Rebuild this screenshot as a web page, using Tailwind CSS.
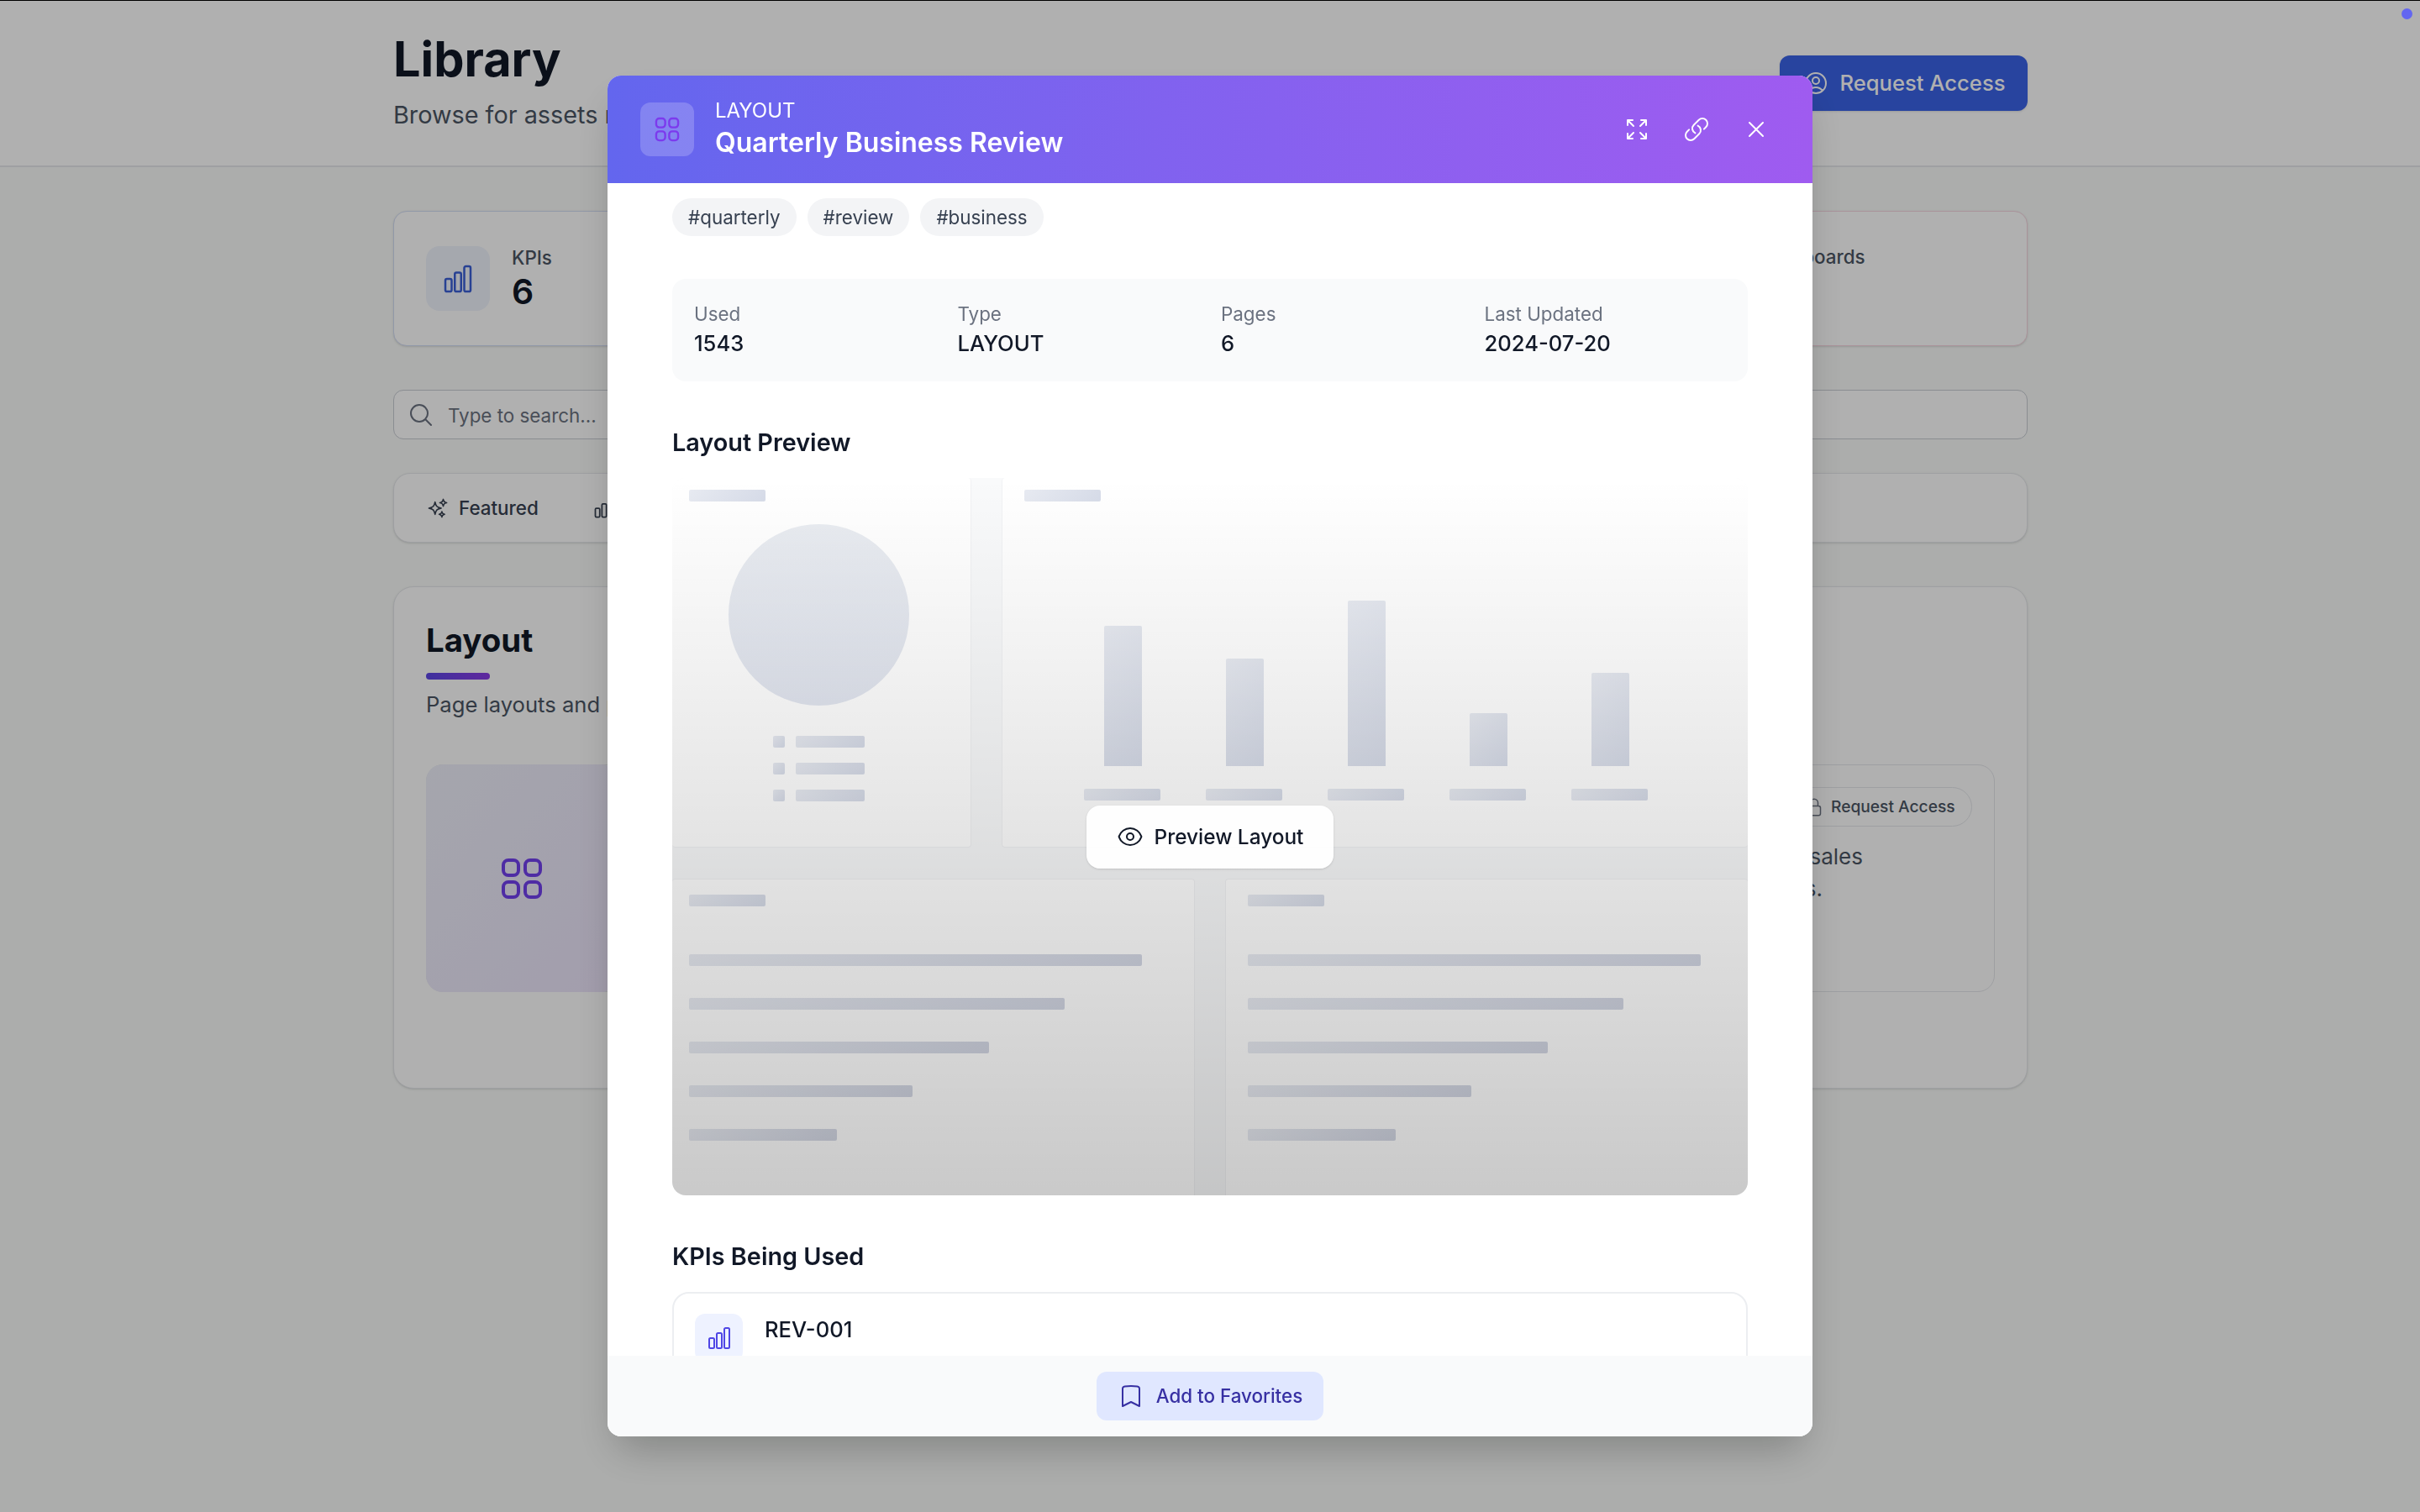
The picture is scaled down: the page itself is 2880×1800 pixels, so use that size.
<!DOCTYPE html>
<html lang="en">
<head>
  <meta charset="UTF-8" />
  <title>Library</title>
  <script src="https://cdn.jsdelivr.net/npm/@tailwindcss/browser@4"></script>
</head>
<body class="bg-[#f9fbf9] text-[#111827] font-[Inter,sans-serif] h-screen overflow-hidden">
  <!-- page behind the modal -->
  <header class="bg-white h-[199px] border-b-2 border-[#e5e7eb] pl-[468px] pr-[467px] flex justify-between">
    <div>
      <h1 class="text-[57.6px] leading-[72px] font-bold mt-[34px]">Library</h1>
      <p class="text-[28.8px] leading-[44px] text-[#4b5563] mt-[9px]">Browse for assets related to your business</p>
    </div>
    <button class="mt-[66px] w-[295px] h-[66px] rounded-[12px] bg-[#3a63e6] text-white text-[25.6px] font-medium flex items-center justify-center gap-[13px] shadow-sm">
      <svg class="w-[32px] h-[32px]" fill="none" viewBox="0 0 24 24" stroke="currentColor" stroke-width="1.5"><path stroke-linecap="round" stroke-linejoin="round" d="M17.982 18.725A7.488 7.488 0 0 0 12 15.75a7.488 7.488 0 0 0-5.982 2.975m11.963 0a9 9 0 1 0-11.963 0m11.963 0A8.966 8.966 0 0 1 12 21a8.966 8.966 0 0 1-5.982-2.275M15 9.75a3 3 0 1 1-6 0 3 3 0 0 1 6 0Z"/></svg>
      Request Access
    </button>
  </header>

  <main class="pl-[468px] pr-[467px] pt-[52px]">
    <div class="grid grid-cols-4 gap-8 h-[161px]">
      <div class="bg-white rounded-[16px] border border-[#d3dcf3] shadow-sm flex items-center gap-[26px] pl-[38px]">
        <div class="w-[76px] h-[77px] rounded-[16px] bg-[#eff3fd] flex items-center justify-center">
          <svg class="w-[40px] h-[40px] text-[#3a5fd6]" fill="none" viewBox="0 0 24 24" stroke="currentColor" stroke-width="1.5"><path d="M3 13.125C3 12.504 3.504 12 4.125 12h2.25c.621 0 1.125.504 1.125 1.125v6.75C7.5 20.496 6.996 21 6.375 21h-2.25A1.125 1.125 0 0 1 3 19.875v-6.75ZM9.75 8.625c0-.621.504-1.125 1.125-1.125h2.25c.621 0 1.125.504 1.125 1.125v11.25c0 .621-.504 1.125-1.125 1.125h-2.25a1.125 1.125 0 0 1-1.125-1.125V8.625ZM16.5 4.125c0-.621.504-1.125 1.125-1.125h2.25C20.496 3 21 3.504 21 4.125v15.75c0 .621-.504 1.125-1.125 1.125h-2.25a1.125 1.125 0 0 1-1.125-1.125V4.125Z"/></svg>
        </div>
        <div class="-mt-[2px]">
          <div class="text-[22.4px] leading-[32px] font-medium text-[#4b5563]">KPIs</div>
          <div class="text-[41px] leading-[48px] font-semibold">6</div>
        </div>
      </div>
      <div class="bg-white rounded-[16px] border border-[#e5e7eb]"></div>
      <div class="bg-white rounded-[16px] border border-[#e5e7eb]"></div>
      <div class="bg-white rounded-[16px] border border-[#f5d5e0] shadow-sm pl-[139px] pt-[38px]">
        <div class="text-[22.4px] leading-[32px] font-medium text-[#4b5563]">Dashboards</div>
      </div>
    </div>

    <div class="mt-[52px] h-[59px] bg-white rounded-[12px] border border-[#c8ccd3] flex items-center gap-[16px] pl-[16px]">
      <svg class="w-[32px] h-[32px] text-[#6b7280]" fill="none" viewBox="0 0 24 24" stroke="currentColor" stroke-width="1.5"><path stroke-linecap="round" stroke-linejoin="round" d="m21 21-5.197-5.197m0 0A7.5 7.5 0 1 0 5.196 5.196a7.5 7.5 0 0 0 10.607 10.607Z"/></svg>
      <span class="mt-[2px] text-[22.4px] text-[#6b7280]">Type to search...</span>
    </div>

    <div class="mt-[40px] h-[83px] bg-white rounded-[20px] border border-[#e5e7eb] shadow-sm flex items-center pl-[39px]">
      <svg class="w-[26px] h-[26px] text-[#374151]" fill="none" viewBox="0 0 24 24" stroke="currentColor" stroke-width="1.5"><path stroke-linecap="round" stroke-linejoin="round" d="M9.813 15.904 9 18.75l-.813-2.846a4.5 4.5 0 0 0-3.09-3.09L2.25 12l2.846-.813a4.5 4.5 0 0 0 3.09-3.09L9 5.25l.813 2.846a4.5 4.5 0 0 0 3.09 3.09L15.75 12l-2.846.813a4.5 4.5 0 0 0-3.09 3.09ZM18.259 8.715 18 9.75l-.259-1.035a3.375 3.375 0 0 0-2.455-2.456L14.25 6l1.036-.259a3.375 3.375 0 0 0 2.455-2.456L18 2.25l.259 1.035a3.375 3.375 0 0 0 2.456 2.456L21.75 6l-1.035.259a3.375 3.375 0 0 0-2.456 2.456ZM16.894 20.567 16.5 21.75l-.394-1.183a2.25 2.25 0 0 0-1.423-1.423L13.5 18.75l1.183-.394a2.25 2.25 0 0 0 1.423-1.423l.394-1.183.394 1.183a2.25 2.25 0 0 0 1.423 1.423l1.183.394-1.183.394a2.25 2.25 0 0 0-1.423 1.423Z"/></svg>
      <span class="ml-[12px] text-[22.4px] font-medium text-[#374151]">Featured</span>
      <svg class="ml-[64px] w-[28px] h-[28px] text-[#374151]" fill="none" viewBox="0 0 24 24" stroke="currentColor" stroke-width="1.5"><path d="M3 13.125C3 12.504 3.504 12 4.125 12h2.25c.621 0 1.125.504 1.125 1.125v6.75C7.5 20.496 6.996 21 6.375 21h-2.25A1.125 1.125 0 0 1 3 19.875v-6.75ZM9.75 8.625c0-.621.504-1.125 1.125-1.125h2.25c.621 0 1.125.504 1.125 1.125v11.25c0 .621-.504 1.125-1.125 1.125h-2.25a1.125 1.125 0 0 1-1.125-1.125V8.625ZM16.5 4.125c0-.621.504-1.125 1.125-1.125h2.25C20.496 3 21 3.504 21 4.125v15.75c0 .621-.504 1.125-1.125 1.125h-2.25a1.125 1.125 0 0 1-1.125-1.125V4.125Z"/></svg>
    </div>

    <section class="mt-[52px] h-[598px] bg-white rounded-[24px] border border-[#e5e7eb] shadow-sm px-[38px] pt-[36px]">
      <h2 class="text-[38.4px] leading-[54px] font-bold">Layout</h2>
      <div class="mt-[12px] w-[76px] h-[8px] rounded-full bg-linear-to-r from-[#5b46e5] to-[#8a3ae5]"></div>
      <p class="mt-[8px] text-[25.6px] leading-[44px] text-[#4b5563]">Page layouts and presentation templates</p>
      <div class="mt-[49px] h-[271px] rounded-[20px] border border-[#e5e7eb] flex">
        <div class="w-[228px] -m-px rounded-[20px] bg-linear-to-br from-[#eff1fb] to-[#ece4fb] flex items-center justify-center">
          <svg class="w-[64px] h-[64px] text-[#7240ee]" fill="none" viewBox="0 0 24 24" stroke="currentColor" stroke-width="1.5"><path d="M3.75 6A2.25 2.25 0 0 1 6 3.75h2.25A2.25 2.25 0 0 1 10.5 6v2.25a2.25 2.25 0 0 1-2.25 2.25H6a2.25 2.25 0 0 1-2.25-2.25V6ZM3.75 15.75A2.25 2.25 0 0 1 6 13.5h2.25a2.25 2.25 0 0 1 2.25 2.25V18a2.25 2.25 0 0 1-2.25 2.25H6A2.25 2.25 0 0 1 3.75 18v-2.25ZM13.5 6a2.25 2.25 0 0 1 2.25-2.25H18A2.25 2.25 0 0 1 20.25 6v2.25A2.25 2.25 0 0 1 18 10.5h-2.25a2.25 2.25 0 0 1-2.25-2.25V6ZM13.5 15.75a2.25 2.25 0 0 1 2.25-2.25H18a2.25 2.25 0 0 1 2.25 2.25V18A2.25 2.25 0 0 1 18 20.25h-2.25A2.25 2.25 0 0 1 13.5 18v-2.25Z"/></svg>
        </div>
        <div class="flex-1 pr-[156px] text-right text-[#4b5563]">
          <div class="flex justify-end -mr-[130px] mt-[26px]">
            <span class="h-[47px] w-[221px] rounded-full border border-[#e5e7eb] flex items-center gap-[8px] pl-[20px] text-[19.2px] font-medium">
              <svg class="w-[24px] h-[24px] text-[#6b7280]" fill="none" viewBox="0 0 24 24" stroke="currentColor" stroke-width="1.5"><path stroke-linecap="round" stroke-linejoin="round" d="M16.5 10.5V6.75a4.5 4.5 0 1 0-9 0v3.75m-.75 11.25h10.5a2.25 2.25 0 0 0 2.25-2.25v-6.75a2.25 2.25 0 0 0-2.25-2.25H6.75a2.25 2.25 0 0 0-2.25 2.25v6.75a2.25 2.25 0 0 0 2.25 2.25Z"/></svg>
              Request Access
            </span>
          </div>
          <p class="mt-[17px] text-[26px] leading-[38px]">Summary of quarterly sales</p>
          <p class="mr-[48px] text-[26px] leading-[38px]">and key metrics.</p>
        </div>
      </div>
    </section>
  </main>

  <!-- modal overlay -->
  <div class="fixed inset-0 bg-black/31 border-t border-black flex items-center justify-center">
    <div class="w-[1434px] h-[1620px] -mt-px bg-white rounded-[16px] shadow-2xl overflow-hidden flex flex-col">
      <div class="h-[128px] shrink-0 bg-linear-to-r from-[#6366ee] to-[#9f5bf0] flex items-center pl-[39px] pr-[51px] text-white">
        <div class="w-[64px] h-[64px] rounded-[12px] bg-white/20 flex items-center justify-center">
          <svg class="w-[38px] h-[38px] text-[#7c3aed]" fill="none" viewBox="0 0 24 24" stroke="currentColor" stroke-width="1.5"><path d="M3.75 6A2.25 2.25 0 0 1 6 3.75h2.25A2.25 2.25 0 0 1 10.5 6v2.25a2.25 2.25 0 0 1-2.25 2.25H6a2.25 2.25 0 0 1-2.25-2.25V6ZM3.75 15.75A2.25 2.25 0 0 1 6 13.5h2.25a2.25 2.25 0 0 1 2.25 2.25V18a2.25 2.25 0 0 1-2.25 2.25H6A2.25 2.25 0 0 1 3.75 18v-2.25ZM13.5 6a2.25 2.25 0 0 1 2.25-2.25H18A2.25 2.25 0 0 1 20.25 6v2.25A2.25 2.25 0 0 1 18 10.5h-2.25a2.25 2.25 0 0 1-2.25-2.25V6ZM13.5 15.75a2.25 2.25 0 0 1 2.25-2.25H18a2.25 2.25 0 0 1 2.25 2.25V18A2.25 2.25 0 0 1 18 20.25h-2.25A2.25 2.25 0 0 1 13.5 18v-2.25Z"/></svg>
        </div>
        <div class="ml-[25px] flex-1">
          <div class="text-[24px] leading-[32px]">LAYOUT</div>
          <div class="text-[32px] leading-[44px] font-semibold">Quarterly Business Review</div>
        </div>
        <div class="flex items-center gap-[39px]">
          <svg class="w-[32px] h-[32px]" fill="none" viewBox="0 0 24 24" stroke="currentColor" stroke-width="1.5"><path stroke-linecap="round" stroke-linejoin="round" d="M3.75 3.75v4.5m0-4.5h4.5m-4.5 0L9 9M3.75 20.25v-4.5m0 4.5h4.5m-4.5 0L9 15M20.25 3.75h-4.5m4.5 0v4.5m0-4.5L15 9m5.25 11.25h-4.5m4.5 0v-4.5m0 4.5L15 15"/></svg>
          <svg class="w-[32px] h-[32px]" fill="none" viewBox="0 0 24 24" stroke="currentColor" stroke-width="1.5"><path stroke-linecap="round" stroke-linejoin="round" d="M13.19 8.688a4.5 4.5 0 0 1 1.242 7.244l-4.5 4.5a4.5 4.5 0 0 1-6.364-6.364l1.757-1.757m13.35-.622 1.757-1.757a4.5 4.5 0 0 0-6.364-6.364l-4.5 4.5a4.5 4.5 0 0 0 1.242 7.244"/></svg>
          <svg class="w-[32px] h-[32px]" fill="none" viewBox="0 0 24 24" stroke="currentColor" stroke-width="1.5"><path stroke-linecap="round" stroke-linejoin="round" d="M6 18 18 6M6 6l12 12"/></svg>
        </div>
      </div>

      <div class="flex-1 overflow-hidden px-[77px] pt-[18px]">
        <div class="flex gap-[13px]">
          <span class="h-[45px] px-[19px] rounded-full bg-[#f3f4f6] text-[#374151] text-[22.4px] flex items-center">#quarterly</span>
          <span class="h-[45px] px-[19px] rounded-full bg-[#f3f4f6] text-[#374151] text-[22.4px] flex items-center">#review</span>
          <span class="h-[45px] px-[19px] rounded-full bg-[#f3f4f6] text-[#374151] text-[22.4px] flex items-center">#business</span>
        </div>

        <div class="mt-[51px] h-[122px] rounded-[16px] bg-[#f9fafb] grid grid-cols-4 gap-x-6 pl-[26px] pr-[24px] pt-[26px]">
          <div>
            <div class="text-[22.4px] leading-[32px] text-[#6b7280]">Used</div>
            <div class="text-[25.6px] leading-[38px] font-medium">1543</div>
          </div>
          <div>
            <div class="text-[22.4px] leading-[32px] text-[#6b7280]">Type</div>
            <div class="text-[25.6px] leading-[38px] font-medium">LAYOUT</div>
          </div>
          <div>
            <div class="text-[22.4px] leading-[32px] text-[#6b7280]">Pages</div>
            <div class="text-[25.6px] leading-[38px] font-medium">6</div>
          </div>
          <div>
            <div class="text-[22.4px] leading-[32px] text-[#6b7280]">Last Updated</div>
            <div class="text-[25.6px] leading-[38px] font-medium">2024-07-20</div>
          </div>
        </div>

        <h3 class="mt-[51px] text-[28.8px] leading-[44px] font-semibold">Layout Preview</h3>

        <!-- wireframe preview -->
        <div class="relative mt-[20px] h-[854px] rounded-[16px] overflow-hidden bg-[#f9fafb]">
          <div class="flex gap-[36px] h-[440px]">
            <div class="w-[356px] bg-white rounded-[4px] border-r border-b border-[#f1f2f4] pt-[14px] pl-[20px]">
              <div class="w-[91px] h-[14px] rounded-[2px] bg-linear-135 from-[#e8ebf2] to-[#d6dbe8]"></div>
              <div class="mt-[27px] ml-[47px] w-[215px] h-[216px] rounded-full bg-linear-to-b from-[#e9ecf1] to-[#e2e6f0]"></div>
              <div class="mt-[36px] ml-[100px] flex flex-col gap-[18px]">
                <div class="flex gap-[13px]"><div class="w-[14px] h-[14px] rounded-[2px] bg-linear-135 from-[#e8ebf2] to-[#d6dbe8]"></div><div class="w-[82px] h-[14px] rounded-[2px] bg-linear-135 from-[#e8ebf2] to-[#d6dbe8]"></div></div>
                <div class="flex gap-[13px]"><div class="w-[14px] h-[14px] rounded-[2px] bg-linear-135 from-[#e8ebf2] to-[#d6dbe8]"></div><div class="w-[82px] h-[14px] rounded-[2px] bg-linear-135 from-[#e8ebf2] to-[#d6dbe8]"></div></div>
                <div class="flex gap-[13px]"><div class="w-[14px] h-[14px] rounded-[2px] bg-linear-135 from-[#e8ebf2] to-[#d6dbe8]"></div><div class="w-[82px] h-[14px] rounded-[2px] bg-linear-135 from-[#e8ebf2] to-[#d6dbe8]"></div></div>
              </div>
            </div>
            <div class="flex-1 bg-white rounded-[4px] border-l border-b border-[#f1f2f4] pt-[14px] pl-[26px]">
              <div class="w-[91px] h-[14px] rounded-[2px] bg-linear-135 from-[#e8ebf2] to-[#d6dbe8]"></div>
              <div class="h-[315px] ml-[95px] flex items-end gap-[99.6px]">
                <div class="w-[45.4px] h-[167px] rounded-t-[2px] bg-linear-135 from-[#e8ebf2] to-[#d6dbe8]"></div>
                <div class="w-[45.4px] h-[128px] rounded-t-[2px] bg-linear-135 from-[#e8ebf2] to-[#d6dbe8]"></div>
                <div class="w-[45.4px] h-[197px] rounded-t-[2px] bg-linear-135 from-[#e8ebf2] to-[#d6dbe8]"></div>
                <div class="w-[45.4px] h-[63px] rounded-t-[2px] bg-linear-135 from-[#e8ebf2] to-[#d6dbe8]"></div>
                <div class="w-[45.4px] h-[111px] rounded-t-[2px] bg-linear-135 from-[#e8ebf2] to-[#d6dbe8]"></div>
              </div>
              <div class="mt-[27px] ml-[71px] flex gap-[54.1px]">
                <div class="w-[91px] h-[14px] rounded-[2px] bg-linear-135 from-[#e8ebf2] to-[#d6dbe8]"></div>
                <div class="w-[91px] h-[14px] rounded-[2px] bg-linear-135 from-[#e8ebf2] to-[#d6dbe8]"></div>
                <div class="w-[91px] h-[14px] rounded-[2px] bg-linear-135 from-[#e8ebf2] to-[#d6dbe8]"></div>
                <div class="w-[91px] h-[14px] rounded-[2px] bg-linear-135 from-[#e8ebf2] to-[#d6dbe8]"></div>
                <div class="w-[91px] h-[14px] rounded-[2px] bg-linear-135 from-[#e8ebf2] to-[#d6dbe8]"></div>
              </div>
            </div>
          </div>
          <div class="flex gap-[36px] mt-[37px] h-[377px]">
            <div class="w-[622px] bg-white rounded-t-[4px] border-t border-r border-[#f1f2f4] pt-[18px] pl-[20px]">
              <div class="w-[91px] h-[14px] rounded-[2px] bg-linear-135 from-[#e8ebf2] to-[#d6dbe8]"></div>
              <div class="mt-[57px] flex flex-col gap-[38px]">
                <div class="w-[539px] h-[14px] rounded-[2px] bg-linear-135 from-[#e8ebf2] to-[#d2d6e3]"></div>
                <div class="w-[447px] h-[14px] rounded-[2px] bg-linear-135 from-[#e8ebf2] to-[#d2d6e3]"></div>
                <div class="w-[357px] h-[14px] rounded-[2px] bg-linear-135 from-[#e8ebf2] to-[#d2d6e3]"></div>
                <div class="w-[266px] h-[14px] rounded-[2px] bg-linear-135 from-[#e8ebf2] to-[#d2d6e3]"></div>
                <div class="w-[176px] h-[14px] rounded-[2px] bg-linear-135 from-[#e8ebf2] to-[#d2d6e3]"></div>
              </div>
            </div>
            <div class="flex-1 bg-white rounded-t-[4px] border-t border-l border-[#f1f2f4] pt-[18px] pl-[26px]">
              <div class="w-[91px] h-[14px] rounded-[2px] bg-linear-135 from-[#e8ebf2] to-[#d6dbe8]"></div>
              <div class="mt-[57px] flex flex-col gap-[38px]">
                <div class="w-[539px] h-[14px] rounded-[2px] bg-linear-135 from-[#e8ebf2] to-[#d2d6e3]"></div>
                <div class="w-[447px] h-[14px] rounded-[2px] bg-linear-135 from-[#e8ebf2] to-[#d2d6e3]"></div>
                <div class="w-[357px] h-[14px] rounded-[2px] bg-linear-135 from-[#e8ebf2] to-[#d2d6e3]"></div>
                <div class="w-[266px] h-[14px] rounded-[2px] bg-linear-135 from-[#e8ebf2] to-[#d2d6e3]"></div>
                <div class="w-[176px] h-[14px] rounded-[2px] bg-linear-135 from-[#e8ebf2] to-[#d2d6e3]"></div>
              </div>
            </div>
          </div>
          <div class="absolute inset-0 bg-linear-to-b from-transparent to-black/21 flex items-center justify-center">
            <button class="w-[294px] h-[75px] rounded-[16px] bg-white/95 shadow-sm flex items-center justify-center gap-[13px] text-[24.4px] font-medium">
              <svg class="w-[32px] h-[32px]" fill="none" viewBox="0 0 24 24" stroke="currentColor" stroke-width="1.5"><path stroke-linecap="round" stroke-linejoin="round" d="M2.036 12.322a1.012 1.012 0 0 1 0-.639C3.423 7.51 7.36 4.5 12 4.5c4.638 0 8.573 3.007 9.963 7.178.07.207.07.431 0 .639C20.577 16.49 16.64 19.5 12 19.5c-4.638 0-8.573-3.007-9.964-7.178Z"/><path stroke-linecap="round" stroke-linejoin="round" d="M15 12a3 3 0 1 1-6 0 3 3 0 0 1 6 0Z"/></svg>
              Preview Layout
            </button>
          </div>
        </div>

        <h3 class="mt-[51px] text-[28.8px] leading-[44px] font-semibold">KPIs Being Used</h3>
        <div class="mt-[20px] h-[200px] rounded-[20px] border-2 border-[#eceef1] flex gap-[26px] pl-[25px] pt-[24px]">
          <div class="w-[57px] h-[57px] rounded-[12px] bg-[#eef2ff] flex items-center justify-center">
            <svg class="w-[32px] h-[32px] text-[#4f46e5]" fill="none" viewBox="0 0 24 24" stroke="currentColor" stroke-width="1.5"><path d="M3 13.125C3 12.504 3.504 12 4.125 12h2.25c.621 0 1.125.504 1.125 1.125v6.75C7.5 20.496 6.996 21 6.375 21h-2.25A1.125 1.125 0 0 1 3 19.875v-6.75ZM9.75 8.625c0-.621.504-1.125 1.125-1.125h2.25c.621 0 1.125.504 1.125 1.125v11.25c0 .621-.504 1.125-1.125 1.125h-2.25a1.125 1.125 0 0 1-1.125-1.125V8.625ZM16.5 4.125c0-.621.504-1.125 1.125-1.125h2.25C20.496 3 21 3.504 21 4.125v15.75c0 .621-.504 1.125-1.125 1.125h-2.25a1.125 1.125 0 0 1-1.125-1.125V4.125Z"/></svg>
          </div>
          <div class="text-[25.6px] leading-[38px] font-medium">REV-001</div>
        </div>
      </div>

      <div class="h-[96px] shrink-0 bg-[#f9fafb] flex items-center justify-center">
        <button class="w-[270px] h-[58px] rounded-[12px] bg-[#e0e7ff] text-[#3730a3] text-[22.4px] font-medium flex items-center justify-center gap-[14px]">
          <svg class="w-[32px] h-[32px]" fill="none" viewBox="0 0 24 24" stroke="currentColor" stroke-width="1.5"><path stroke-linecap="round" stroke-linejoin="round" d="M17.593 3.322c1.1.128 1.907 1.077 1.907 2.185V21L12 17.25 4.5 21V5.507c0-1.108.806-2.057 1.907-2.185a48.507 48.507 0 0 1 11.186 0Z"/></svg>
          Add to Favorites
        </button>
      </div>
    </div>
  </div>

  <div class="fixed top-[10px] right-[9px] w-[13px] h-[13px] rounded-full bg-[#6366f1]"></div>
</body>
</html>
